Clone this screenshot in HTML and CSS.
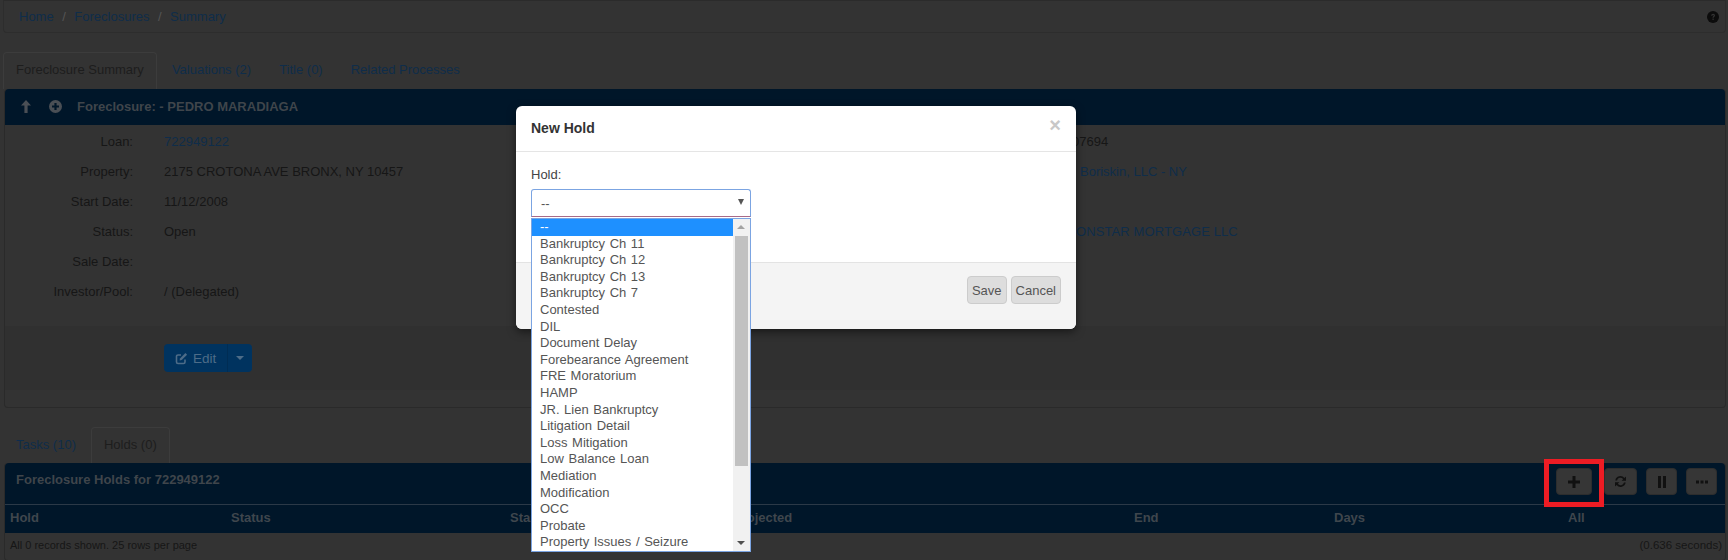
FILE: index.html
```html
<!DOCTYPE html>
<html lang="en">
<head>
    <meta charset="UTF-8">
    <meta name="viewport" content="width=device-width, initial-scale=1.0">
    <title>Foreclosure Summary</title>
    <link rel="stylesheet" href="styles.css">
</head>
<body>
    <div class="breadcrumb">
        <div class="crumbs">
            <a href="#">Home</a><span class="sep">/</span><a href="#">Foreclosures</a><span class="sep">/</span><a href="#">Summary</a>
        </div>
        <svg class="help" width="12" height="12" viewBox="0 0 12 12"><circle cx="6" cy="6" r="6" fill="#0c0c0c"/><path d="M4.2 4.7c0-1.2.8-1.9 1.9-1.9s1.9.7 1.9 1.7c0 1.2-1.3 1.3-1.3 2.3H5.5c0-1.5 1.2-1.6 1.2-2.3 0-.4-.3-.6-.6-.6-.4 0-.7.3-.7.8zM5.5 7.6h1.2v1.3H5.5z" fill="#333"/></svg>
    </div>

    <div class="tabs tabs-top">
        <a class="tab active" href="#">Foreclosure Summary</a>
        <a class="tab" href="#">Valuations (2)</a>
        <a class="tab" href="#">Title (0)</a>
        <a class="tab" href="#">Related Processes</a>
    </div>

    <div class="panel">
        <div class="panel-heading">
            <svg class="head-icon" width="12" height="13" viewBox="0 0 12 13"><path d="M6 0l5 5.6H7.6V13H4.4V5.6H1z" fill="#4a4f55"/></svg>
            <svg class="head-icon" width="13" height="13" viewBox="0 0 13 13"><path fill-rule="evenodd" d="M6.5 0a6.5 6.5 0 1 1 0 13a6.5 6.5 0 0 1 0-13zM5.4 3v2.400H3v2.200h2.400V10h2.200V7.600H10V5.400H7.600V3z" fill="#4a4f55"/></svg>
            <span class="panel-title">Foreclosure: - PEDRO MARADIAGA</span>
        </div>
        <div class="details">
            <div class="detail-col">
                <div class="row"><span class="label">Loan:</span><a href="#">722949122</a></div>
                <div class="row"><span class="label">Property:</span><span>2175 CROTONA AVE BRONX, NY 10457</span></div>
                <div class="row"><span class="label">Start Date:</span><span>11/12/2008</span></div>
                <div class="row"><span class="label">Status:</span><span>Open</span></div>
                <div class="row"><span class="label">Sale Date:</span></div>
                <div class="row"><span class="label">Investor/Pool:</span><span>/ (Delegated)</span></div>
            </div>
            <div class="detail-col right-col">
                <div class="row"><span class="loan-no">07694</span></div>
                <div class="row"><a class="firm" href="#">Boriskin, LLC - NY</a></div>
                <div class="row"></div>
                <div class="row"><a class="servicer" href="#">NATIONSTAR MORTGAGE LLC</a></div>
            </div>
        </div>
        <div class="panel-actions">
            <div class="edit-group">
                <a class="edit-btn" href="#">
                    <svg width="13" height="13" viewBox="0 0 13 13"><path d="M10 7.500v2.500a1.500 1.500 0 0 1-1.500 1.500H3A1.500 1.500 0 0 1 1.500 10V4.500A1.500 1.500 0 0 1 3 3h3" fill="none" stroke="#4d6c88" stroke-width="1.600"/><path d="M5 6.400L10.400 1l1.700 1.700-5.400 5.400-2.100.4z" fill="#4d6c88"/></svg>
                    Edit
                </a>
                <a class="edit-caret" href="#"><span class="caret"></span></a>
            </div>
        </div>
    </div>

    <div class="tabs tabs-bottom">
        <a class="tab" href="#">Tasks (10)</a>
        <a class="tab active" href="#">Holds (0)</a>
    </div>

    <div class="panel holds">
        <div class="holds-heading">
            <span class="panel-title">Foreclosure Holds for 722949122</span>
            <div class="tools">
                <button class="tool tool-add"><svg width="12" height="12" viewBox="0 0 12 12"><path d="M4.500 0h3v4.500H12v3H7.500V12h-3V7.500H0v-3h4.500z" fill="#111"/></svg></button>
                <button class="tool tool-sync"><svg width="13" height="13" viewBox="0 0 13 13"><path d="M1.300 5.400A5.200 5.200 0 0 1 10.400 3L12 1.400v4.400H7.600l1.600-1.600A3.500 3.500 0 0 0 3 5.400zM11.700 7.600A5.200 5.200 0 0 1 2.600 10L1 11.600V7.200h4.400L3.800 8.800A3.500 3.500 0 0 0 10 7.600z" fill="#111"/></svg></button>
                <button class="tool tool-pause"><svg width="10" height="12" viewBox="0 0 10 12"><path d="M1 0h3v12H1zM6 0h3v12H6z" fill="#111"/></svg></button>
                <button class="tool tool-more"><svg width="12" height="4" viewBox="0 0 12 4"><path d="M0 .500h3v3H0zM4.500 .500h3v3h-3zM9 .500h3v3H9z" fill="#111"/></svg></button>
            </div>
        </div>
        <div class="table-head">
            <span class="col-hold">Hold</span>
            <span class="col-status">Status</span>
            <span class="col-start">Start</span>
            <span class="col-projected">Projected</span>
            <span class="col-end">End</span>
            <span class="col-days">Days</span>
            <span class="col-all">All</span>
        </div>
        <div class="table-foot">
            <span class="foot-count">All 0 records shown. 25 rows per page</span>
            <span>(0.636 seconds)</span>
        </div>
    </div>

    <!-- red box from the screenshot annotation -->
    <div class="callout"></div>

    <div class="modal">
        <div class="modal-header">
            <h4>New Hold</h4>
            <span class="close">&times;</span>
        </div>
        <div class="modal-body">
            <div class="field-label">Hold:</div>
            <div class="select-box">
                <span>--</span>
                <span class="select-arrow"></span>
            </div>
        </div>
        <div class="modal-footer">
            <button class="btn">Save</button>
            <button class="btn">Cancel</button>
        </div>
    </div>

    <div class="dropdown">
        <div class="options">
            <div class="option selected">--</div>
            <div class="option">Bankruptcy Ch 11</div>
            <div class="option">Bankruptcy Ch 12</div>
            <div class="option">Bankruptcy Ch 13</div>
            <div class="option">Bankruptcy Ch 7</div>
            <div class="option">Contested</div>
            <div class="option">DIL</div>
            <div class="option">Document Delay</div>
            <div class="option">Forebearance Agreement</div>
            <div class="option">FRE Moratorium</div>
            <div class="option">HAMP</div>
            <div class="option">JR. Lien Bankruptcy</div>
            <div class="option">Litigation Detail</div>
            <div class="option">Loss Mitigation</div>
            <div class="option">Low Balance Loan</div>
            <div class="option">Mediation</div>
            <div class="option">Modification</div>
            <div class="option">OCC</div>
            <div class="option">Probate</div>
            <div class="option">Property Issues / Seizure</div>
        </div>
        <div class="scrollbar">
            <span class="scroll-up"></span>
            <span class="scroll-thumb"></span>
            <span class="scroll-down"></span>
        </div>
    </div>
</body>
</html>
```

FILE: styles.css
```css
html, body {
    height: 560px;
    overflow: hidden;
}

body {
    margin: 0;
    background: #333;
    color: #161616;
    font-family: "Liberation Sans", Arial, sans-serif;
    font-size: 13px;
}

a {
    color: #0f2d4a;
    text-decoration: none;
}

/* breadcrumb */
.breadcrumb {
    display: flex;
    justify-content: space-between;
    align-items: center;
    box-sizing: border-box;
    height: 33px;
    margin: 0 2px 0 3px;
    padding: 0 6px 0 15px;
    border: 1px solid #2d2d2d;
    border-top-color: #2b2b2b;
    border-radius: 0 0 4px 4px;
}

.sep {
    margin: 0 8.5px;
    color: #555;
}

/* tabs */
.tabs {
    display: flex;
    margin-left: 3px;
}

.tabs-top {
    margin-top: 19px;
    height: 37px;
}

.tabs-bottom {
    margin-top: 19px;
    height: 36px;
}

.tab {
    display: flex;
    align-items: center;
    padding: 0 12px 3px;
    margin-right: 2px;
    border: 1px solid transparent;
    border-bottom: 0;
    border-radius: 4px 4px 0 0;
}

.tabs-bottom .tab {
    padding-bottom: 2px;
}

.tab.active {
    color: #1d1d1d;
    border-color: #3c3c3c;
}

/* panels */
.panel {
    margin: 0 2px 0 4px;
    border: 1px solid #2a2a2a;
    border-top: 0;
    border-radius: 4px;
}

.panel-heading {
    display: flex;
    align-items: center;
    box-sizing: border-box;
    height: 36px;
    padding: 0 0 2px 15px;
    background: #001629;
    border-radius: 4px 4px 0 0;
}

.head-icon {
    margin-right: 17px;
}

.head-icon + .head-icon {
    margin-right: 15px;
}

.panel-title {
    color: #3f454b;
    font-size: 13px;
    font-weight: bold;
}

.details {
    display: flex;
    justify-content: space-between;
    height: 200px;
    padding-top: 1px;
}

.detail-col {
    width: 600px;
}

.right-col {
    width: 678px;
}

.row {
    display: flex;
    align-items: center;
    height: 30px;
}

.label {
    box-sizing: border-box;
    width: 128px;
    margin-right: 31px;
    text-align: right;
}

.loan-no {
    padding-left: 25px;
}

.firm {
    padding-left: 33px;
}

.servicer {
    letter-spacing: 0.1px;
}

.panel-actions {
    display: flex;
    align-items: center;
    height: 64px;
    padding-left: 159px;
    margin-bottom: 17px;
    background: #303030;
}

.edit-group {
    display: flex;
    height: 28px;
    background: #00335f;
    border-radius: 4px;
}

.edit-btn {
    display: flex;
    align-items: center;
    gap: 5px;
    padding: 0 11px;
    color: #4d6c88;
    font-size: 13.5px;
    border-right: 1px solid #002d54;
}

.edit-caret {
    display: flex;
    align-items: center;
    padding: 0 8px;
}

.caret {
    width: 0;
    height: 0;
    border: 4px solid transparent;
    border-top-color: #4d6c88;
    border-bottom: 0;
}

/* holds table */
.holds {
    height: 97px;
    margin-bottom: 0;
}

.holds-heading {
    display: flex;
    justify-content: space-between;
    box-sizing: border-box;
    height: 42px;
    padding: 5px 8px 0 11px;
    background: #001629;
    border-bottom: 1px solid #2b3947;
    border-radius: 4px 4px 0 0;
}

.holds-heading .panel-title {
    margin-top: 4px;
}

.tools {
    display: flex;
    gap: 0;
}

.tool {
    display: flex;
    align-items: center;
    justify-content: center;
    height: 27px;
    padding: 0;
    background: #363636;
    border: 1px solid #2d2d2d;
    border-radius: 4px;
}

.tool-add { width: 36px; margin-right: 12px; }
.tool-sync { width: 33px; margin-right: 9px; }
.tool-pause { width: 31px; margin-right: 9px; }
.tool-more { width: 31px; }

.table-head {
    display: flex;
    align-items: center;
    box-sizing: border-box;
    height: 28px;
    padding: 0 0 3px 5px;
    color: #3f464d;
    font-weight: bold;
    background: #001629;
}

.col-hold { width: 221px; }
.col-status { width: 279px; }
.col-start { width: 223px; }
.col-projected { width: 401px; }
.col-end { width: 200px; }
.col-days { width: 234px; }

.table-foot {
    display: flex;
    justify-content: space-between;
    align-items: center;
    box-sizing: border-box;
    height: 26px;
    padding: 0 3px 2px 5px;
    font-size: 11.5px;
}

.foot-count {
    font-size: 11px;
}

.callout {
    position: absolute;
    left: 1544px;
    top: 459px;
    box-sizing: border-box;
    width: 60px;
    height: 48px;
    border: 5px solid #ed1c24;
}

/* modal */
.modal {
    position: absolute;
    left: 516px;
    top: 106px;
    width: 560px;
    height: 223px;
    display: flex;
    flex-direction: column;
    background: #fff;
    border-radius: 6px;
    box-shadow: 0 3px 9px rgba(0, 0, 0, 0.5);
    overflow: hidden;
}

.modal-header {
    display: flex;
    justify-content: space-between;
    align-items: center;
    box-sizing: border-box;
    height: 46px;
    padding: 0 15px 2px;
    border-bottom: 1px solid #e5e5e5;
}

.modal-header h4 {
    margin: 0;
    color: #333;
    font-size: 14px;
}

.close {
    margin: -4px 0 0 0;
    color: #c8c8c8;
    font-size: 20px;
    font-weight: bold;
}

.modal-body {
    box-sizing: border-box;
    height: 110px;
    padding: 15px 15px 0;
    color: #444;
}

.field-label {
    margin-bottom: 7px;
}

.select-box {
    display: flex;
    justify-content: space-between;
    align-items: center;
    box-sizing: border-box;
    width: 220px;
    height: 28px;
    padding: 0 6px 0 9px;
    color: #555;
    background: #fff;
    border: 1px solid #7ba4e2;
    border-bottom-color: #a86a88;
    border-radius: 3px 3px 0 0;
}

.select-arrow {
    width: 0;
    height: 0;
    margin-top: -2px;
    border-style: solid;
    border-width: 6px 3.5px 0;
    border-color: #555 transparent transparent;
}

.modal-footer {
    display: flex;
    justify-content: flex-end;
    gap: 4px;
    flex: 1;
    padding: 13px 15px 0;
    background: #f4f4f4;
    border-top: 1px solid #e3e3e3;
}

.btn {
    height: 28px;
    padding: 0 4px;
    color: #555;
    font-family: inherit;
    font-size: 13px;
    background: #ddd;
    border: 1px solid #ccc;
    border-radius: 4px;
}

/* open select list */
.dropdown {
    position: absolute;
    left: 531px;
    top: 218px;
    display: flex;
    box-sizing: border-box;
    width: 220px;
    height: 334px;
    background: #fff;
    border: 1px solid #7ba4e2;
    overflow: hidden;
}

.options {
    flex: 1;
}

.option {
    height: 16.6px;
    padding-left: 8px;
    color: #555;
    font-size: 13px;
    line-height: 16px;
    word-spacing: 1px;
    white-space: nowrap;
}

.option.selected {
    color: #fff;
    background: #1e90ff;
}

.scrollbar {
    display: flex;
    flex-direction: column;
    align-items: center;
    position: relative;
    width: 17px;
    background: #f1f1f1;
}

.scroll-up,
.scroll-down {
    position: absolute;
    left: 4px;
    width: 0;
    height: 0;
    border-left: 4px solid transparent;
    border-right: 4px solid transparent;
}

.scroll-up {
    top: 6px;
    border-bottom: 4px solid #a3a3a3;
}

.scroll-down {
    bottom: 6px;
    border-top: 4px solid #505050;
}

.scroll-thumb {
    width: 13px;
    height: 230px;
    margin-top: 17px;
    background: #c1c1c1;
}
```
